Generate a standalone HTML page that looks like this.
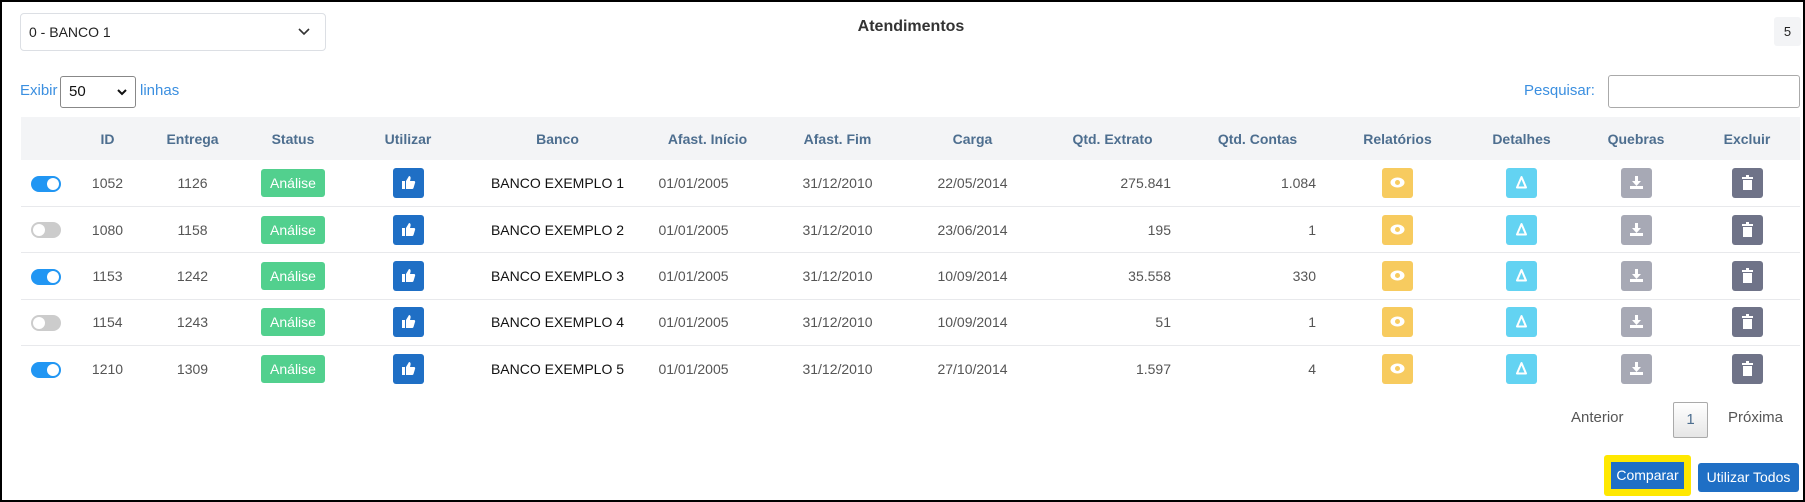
<!DOCTYPE html>
<html><head><meta charset="utf-8"><style>
*{box-sizing:border-box;margin:0;padding:0}
body{width:1805px;height:502px;overflow:hidden;background:#fff;font-family:"Liberation Sans",sans-serif;position:relative}
.frame{position:absolute;left:0;top:0;width:1805px;height:502px;border:2px solid #000}
.abs{position:absolute}
.sel{left:20px;top:13px;width:306px;height:38px;border:1px solid #dcdfe4;border-radius:4px;font-size:14px;color:#222;padding:10px 0 0 8px}
.title{left:0;width:1822px;top:18px;text-align:center;font-size:16px;color:#333;font-weight:bold}
.badge{left:1774px;top:17px;width:27px;height:29px;background:#f3f4f6;border-radius:3px;font-size:13px;text-align:center;line-height:29px;color:#222}
.lnk{color:#3b8fe0;font-size:15px}
table{position:absolute;left:21px;top:117px;width:1779px;border-collapse:collapse;font-size:14px;color:#555}
th{height:43px;background:#f3f4f6;color:#4d6e8f;font-weight:bold;font-size:14px;text-align:center}
td{height:46.4px;text-align:center;border-top:1px solid #e8e9ec;white-space:nowrap}
.r{text-align:right;padding-right:14px}
.ai{padding-right:28px}
.tg{display:inline-block;width:30px;height:16px;border-radius:8px;background:#2196f3;position:relative;vertical-align:middle}
.tg:after{content:"";position:absolute;top:2px;right:2px;width:12px;height:12px;border-radius:50%;background:#fff}
.tg.off{background:#ccc}.tg.off:after{right:auto;left:2px}
.an{display:inline-block;width:64px;height:28px;line-height:28px;background:#52d08e;color:#fff;border-radius:3px;font-size:14px}
.ib{display:inline-block;width:31px;height:30px;border-radius:3px;vertical-align:middle;position:relative}
.ib svg{position:absolute;left:8px;top:7px}
.bk{color:#111}
.btn{color:#fff;background:#1f6fc5;font-size:14px;text-align:center;border-radius:3px}
</style></head><body>
<div class="abs sel">0 - BANCO 1<svg class="abs" style="left:277px;top:14px" width="12" height="8"><path d="M1 1l5 5 5-5" stroke="#333" stroke-width="1.6" fill="none"/></svg></div>
<div class="abs title">Atendimentos</div>
<div class="abs badge">5</div>
<div class="abs lnk" style="left:20px;top:82px">Exibir</div>
<div class="abs" style="left:60px;top:76px;width:76px;height:32px;border:1px solid #888;border-radius:3px;font-size:15px;padding:6px 0 0 8px;color:#111">50<svg class="abs" style="left:56px;top:12px" width="10" height="7"><path d="M1 1l4 4 4-4" stroke="#111" stroke-width="2" fill="none"/></svg></div>
<div class="abs lnk" style="left:140px;top:82px">linhas</div>
<div class="abs lnk" style="left:1524px;top:82px">Pesquisar:</div>
<div class="abs" style="left:1608px;top:75px;width:192px;height:33px;border:1px solid #aaa;border-radius:3px"></div>
<table>
<colgroup><col style="width:49px"><col style="width:75px"><col style="width:95px"><col style="width:106px"><col style="width:124px"><col style="width:175px"><col style="width:125px"><col style="width:135px"><col style="width:135px"><col style="width:145px"><col style="width:145px"><col style="width:135px"><col style="width:113px"><col style="width:116px"><col style="width:106px"></colgroup>
<tr><th></th><th>ID</th><th>Entrega</th><th>Status</th><th>Utilizar</th><th>Banco</th><th>Afast. Início</th><th>Afast. Fim</th><th>Carga</th><th>Qtd. Extrato</th><th>Qtd. Contas</th><th>Relatórios</th><th>Detalhes</th><th>Quebras</th><th>Excluir</th></tr>
<tr><td style="border-top:none"><span class="tg"></span></td><td style="border-top:none">1052</td><td style="border-top:none">1126</td><td style="border-top:none"><span class="an">Análise</span></td><td style="border-top:none"><span class="ib" style="background:#1f6fc5"><svg width="15" height="15"><path d="M1 6h3v8H1zM5 6l3-5c1 0 2 1 1.5 3L9 6h4c1 0 1.5 1 1 2l-1.5 5c-.3.7-.8 1-1.5 1H5z" fill="#fff"/></svg></span></td><td class="bk" style="border-top:none">BANCO EXEMPLO 1</td><td class="ai" style="border-top:none">01/01/2005</td><td style="border-top:none">31/12/2010</td><td style="border-top:none">22/05/2014</td><td class="r" style="border-top:none">275.841</td><td class="r" style="border-top:none">1.084</td>
<td style="border-top:none"><span class="ib" style="background:#f7cb5f"><svg width="15" height="15"><ellipse cx="7.5" cy="7.5" rx="7" ry="5" fill="#fff"/><circle cx="7.5" cy="7.5" r="2.5" fill="#f7cb5f"/></svg></span></td><td style="border-top:none"><span class="ib" style="background:#63d3f2"><svg width="15" height="15"><path d="M7.5 2L3 12.5h9z" stroke="#fff" stroke-width="2" fill="none" stroke-linejoin="round"/></svg></span></td><td style="border-top:none"><span class="ib" style="background:#a7a9b5"><svg width="15" height="15"><path d="M6 1h3v5h3l-4.5 5L3 6h3zM1 11h13v3H1z" fill="#fff"/></svg></span></td><td style="border-top:none"><span class="ib" style="background:#6f7388"><svg width="15" height="15"><path d="M2 2h11v2H2zM6 0h3v2H6zM3 5h9v10H3z" fill="#fff"/></svg></span></td></tr>
</table>
<div class="abs" style="left:1571px;top:409px;font-size:15px;color:#555">Anterior</div>
<div class="abs" style="left:1673px;top:402px;width:35px;height:36px;border:1px solid #aaa;border-radius:2px;background:linear-gradient(#fff,#e6e6e6);text-align:center;line-height:34px;font-size:15px;color:#4d6e8f">1</div>
<div class="abs" style="left:1728px;top:409px;font-size:15px;color:#555">Próxima</div>
<div class="abs" style="left:1604px;top:455px;width:87px;height:41px;background:#ffe800;border-radius:3px"></div>
<div class="abs btn" style="left:1611px;top:462px;width:73px;height:27px;line-height:27px;border-radius:0">Comparar</div>
<div class="abs btn" style="left:1698px;top:463px;width:101px;height:29px;line-height:29px">Utilizar Todos</div>
<div class="frame"></div>
<script>
var t=document.querySelector('table'),tpl=t.rows[1];
var d=[["on","1080","1158","BANCO EXEMPLO 2","23/06/2014","195","1"],["","1153","1242","BANCO EXEMPLO 3","10/09/2014","35.558","330"],["on","1154","1243","BANCO EXEMPLO 4","10/09/2014","51","1"],["","1210","1309","BANCO EXEMPLO 5","27/10/2014","1.597","4"]];
d.forEach(function(r){var n=tpl.cloneNode(true);for(var i=0;i<n.cells.length;i++)n.cells[i].style.borderTop="";
if(r[0])n.cells[0].firstChild.className="tg off";n.cells[1].textContent=r[1];n.cells[2].textContent=r[2];n.cells[5].textContent=r[3];n.cells[8].textContent=r[4];n.cells[9].textContent=r[5];n.cells[10].textContent=r[6];t.tBodies[0].appendChild(n);});
</script>
</body></html>
